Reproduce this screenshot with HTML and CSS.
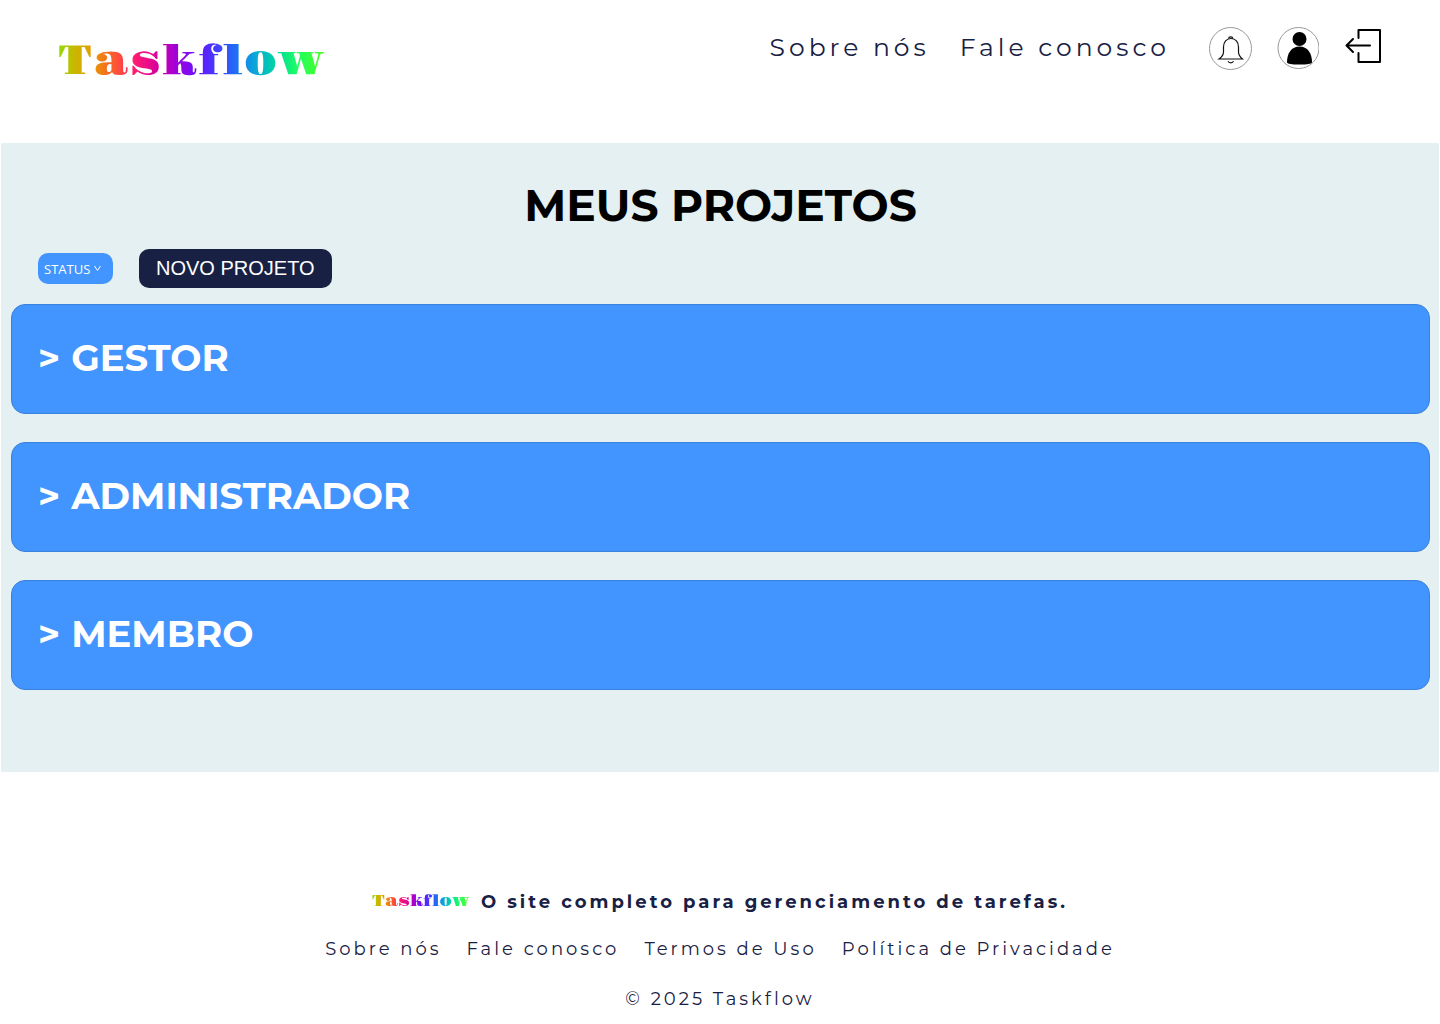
FILE: index.html
```html
<!DOCTYPE html>
<html lang="pt-BR">
<head>
<meta charset="utf-8">
<title>Taskflow - Meus projetos</title>
<meta name="viewport" content="width=device-width, initial-scale=1">
<link rel="stylesheet" href="styles.css">
</head>
<body>
<header class="topbar">
  <a class="logo" href="#">Taskflow</a>
  <nav class="topnav">
    <a href="#">Sobre nós</a>
    <a href="#">Fale conosco</a>
  </nav>
  <div class="actions">
    <button class="icon-button" type="button" aria-label="Notificações">
      <svg width="44" height="44" viewBox="0 0 44 44" fill="none" stroke="#111">
        <circle cx="22.500" cy="22.500" r="21" stroke="#999"/>
        <path d="M11 33h23.500c-3-2.500-4-4-4-7v-5c0-5-3-8.500-7.500-8.500s-7.500 3.500-7.500 8.500v5c0 3-1 4.500-4.500 7z" stroke-width="1.200"/>
        <path d="M20.700 12.800c0-2.500 4-2.500 4 0M20 35.300c1 2 4.500 2 5.500 0" stroke-width="1.200"/>
      </svg>
    </button>
    <button class="icon-button" type="button" aria-label="Perfil">
      <svg width="44" height="44" viewBox="-1 0 44 44">
        <circle cx="22.500" cy="22" r="20.500" fill="none" stroke="#999"/>
        <circle cx="23.500" cy="13" r="7"/>
        <path d="M11 36.500C11 27 15.500 20.500 23.500 20.500S36 27 36 36.500c-1 1.500-4 2-12.500 2S12 38 11 36.500z"/>
      </svg>
    </button>
    <button class="icon-button" type="button" aria-label="Sair">
      <svg width="44" height="44" viewBox="0 0 44 44" fill="none" stroke="#000" stroke-width="2" stroke-linecap="round" stroke-linejoin="round">
        <path d="M16.500 12V4H38v32H16.500V27M28 19.500H5M11 13l-6.500 6.500L11 26"/>
      </svg>
    </button>
  </div>
</header>
<main class="projects">
  <h1 class="title">MEUS PROJETOS</h1>
  <div class="toolbar">
    <div class="status">
      <select class="status-select" aria-label="Filtrar por status">
        <option>STATUS</option>
      </select>
      <svg class="status-arrow" width="7" height="7" viewBox="0 0 7 7" fill="none" stroke="#fff"><path d="M.5 1l3 4.500L6.500 1"/></svg>
    </div>
    <button class="new-project" type="button">NOVO PROJETO</button>
  </div>
  <div class="roles">
    <button class="role" type="button" aria-expanded="false"><span>&gt;</span>GESTOR</button>
    <button class="role" type="button" aria-expanded="false"><span>&gt;</span>ADMINISTRADOR</button>
    <button class="role" type="button" aria-expanded="false"><span>&gt;</span>MEMBRO</button>
  </div>
</main>
<footer class="footer">
  <div class="tagline"><span class="logo logo-small">Taskflow</span><strong>O site completo para gerenciamento de tarefas.</strong></div>
  <nav class="footnav">
    <a href="#">Sobre nós</a>
    <a href="#">Fale conosco</a>
    <a href="#">Termos de Uso</a>
    <a href="#">Política de Privacidade</a>
  </nav>
  <p class="copyright">© 2025 Taskflow</p>
</footer>
</body>
</html>
```
FILE: styles.css
```css
* { box-sizing: border-box; }
body {
  margin: 0;
  background: #fff;
  color: #182144;
  font-family: Montserrat, Inter, sans-serif;
}
a { color: inherit; text-decoration: none; }
button { border: 0; cursor: pointer; font-family: inherit; }

.topbar {
  display: flex;
  align-items: flex-start;
  min-height: 143px;
  padding: 26px 54px 0 58px;
}
.logo {
  background: linear-gradient(90deg, #8fdc00 0%, #c9b800 6%, #e89a00 13%, #ff4a3c 23%, #ff1a72 29%, #d400a0 38%, #a800d0 43%, #6a10ff 52%, #4040ff 60%, #1a78f0 68%, #0aa8d8 74%, #00d8a0 82%, #20ff60 90%, #50ff20 100%);
  background-clip: text;
  -webkit-background-clip: text;
  color: transparent;
  font: 400 40px/72px "Gravitas One", "Abril Fatface", "DejaVu Serif", serif;
  letter-spacing: 1px;
}
.topnav {
  display: flex;
  gap: 30px;
  margin-left: auto;
  font-size: 25px;
  line-height: 42px;
  letter-spacing: 4px;
  white-space: nowrap;
}
.actions {
  display: flex;
  gap: 23px;
  margin-left: 38px;
}
.icon-button {
  width: 44px;
  height: 44px;
  padding: 0;
  background: none;
}
.icon-button svg { display: block; }

.projects {
  min-height: 629px;
  margin: 0 1px;
  padding: 35px 9px 82px 10px;
  background: #e4f0f1;
}
.title {
  margin: 0;
  color: #000;
  font-size: 44px;
  line-height: 54px;
  font-weight: 700;
  text-align: center;
}
.toolbar {
  display: flex;
  align-items: center;
  gap: 26px;
  margin: 17px 0 16px 27px;
}
.status {
  display: grid;
  align-items: center;
  width: 75px;
}
.status-select {
  grid-area: 1 / 1;
  width: 100%;
  height: 31px;
  padding: 0 6px;
  border: 0;
  border-radius: 10px;
  appearance: none;
  background: #4294ff;
  color: #fff;
  font: 13px "Open Sans", sans-serif;
}
.status-arrow {
  grid-area: 1 / 1;
  justify-self: end;
  margin-right: 12px;
  pointer-events: none;
}
.new-project {
  height: 39px;
  padding: 0 17px;
  border-radius: 10px;
  background: #182144;
  color: #fff;
  font: 20px "Liberation Sans", sans-serif;
}
.roles { display: grid; gap: 28px; }
.role {
  display: flex;
  align-items: center;
  gap: 11px;
  height: 110px;
  padding: 0 26px 4px;
  border: 1px solid #3b82dc;
  border-radius: 14px;
  background: #4294ff;
  color: #fff;
  font-size: 37px;
  font-weight: 700;
}

.footer {
  display: flex;
  flex-direction: column;
  align-items: center;
  padding: 116px 24px 12px;
  font-size: 18px;
  line-height: 28px;
  letter-spacing: 3px;
}
.tagline {
  display: flex;
  align-items: center;
  gap: 12px;
}
.logo-small {
  font-size: 15px;
  line-height: 28px;
  letter-spacing: 0;
}
.footnav {
  display: flex;
  gap: 25px;
  margin-top: 19px;
}
.copyright { margin: 22px 0 0; }
```
